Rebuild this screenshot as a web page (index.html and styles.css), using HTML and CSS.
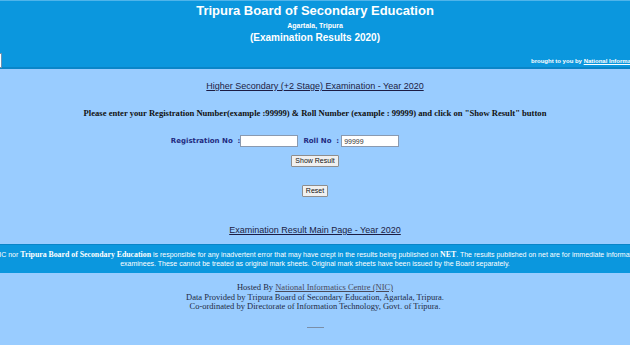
FILE: index.html
```html
<!DOCTYPE html>
<html lang="en">
<head>
    <meta charset="UTF-8">
    <title>TBSE Examination Results 2020</title>
    <link rel="stylesheet" href="styles.css">
</head>
<body>
    <div class="header">
        <div class="title">Tripura Board of Secondary Education</div>
        <div class="place">Agartala, Tripura</div>
        <div class="subtitle">(Examination Results 2020)</div>
        <div class="header-row">
            <input type="text" class="search-box">
            <span class="brought">brought to you by <a href="#">National Informatics Centre</a></span>
        </div>
    </div>

    <div class="main">
        <h3 class="exam-title"><a href="#">Higher Secondary (+2 Stage) Examination - Year 2020</a></h3>
        <p class="instructions">Please enter your Registration Number(example :99999) &amp; Roll Number (example : 99999) and click on "Show Result" button</p>

        <div class="form-row">
            <label for="regno">Registration No&nbsp; :</label>
            <input type="text" id="regno" class="field">
            <label for="rollno" class="roll-label">Roll No&nbsp; :</label>
            <input type="text" id="rollno" class="field" value="99999">
        </div>
        <div class="button-row">
            <button type="button">Show Result</button>
        </div>
        <div class="button-row reset-row">
            <button type="reset">Reset</button>
        </div>

        <div class="main-link"><a href="#">Examination Result Main Page - Year 2020</a></div>
    </div>

    <div class="disclaimer">
        <p>Neither NIC nor <b>Tripura Board of Secondary Education</b> is responsible for any inadvertent error that may have crept in the results being published on <b>NET</b>. The results published on net are for immediate information to the<br>examinees. These cannot be treated as original mark sheets. Original mark sheets have been issued by the Board separately.</p>
    </div>

    <div class="footer">
        Hosted By <a href="#">National Informatics Centre (NIC)</a><br>
        Data Provided by Tripura Board of Secondary Education, Agartala, Tripura.<br>
        Co-ordinated by Directorate of Information Technology, Govt. of Tripura.
        <hr>
    </div>
</body>
</html>
```

FILE: styles.css
```css
body {
    margin: 0;
    background-color: #99ccff;
    font-family: "Liberation Sans", Arial, sans-serif;
    overflow: hidden;
}
.header {
    background-color: #0b97de;
    border-top: 1px solid #4fb4ea;
    border-bottom: 2px solid #0a85c8;
    color: #fff;
    text-align: center;
    height: 66px;
}
.title {
    font-size: 13px;
    font-weight: bold;
    padding-top: 1px;
    line-height: 17px;
}
.place {
    font-size: 7px;
    font-weight: bold;
    line-height: 11px;
    margin-top: 1px;
}
.subtitle {
    font-size: 10px;
    font-weight: bold;
    line-height: 13px;
}
.header-row {
    display: flex;
    justify-content: space-between;
    align-items: center;
    margin-top: 9px;
}
.search-box {
    margin: 0 0 0 -60px;
    width: 60px;
    height: 13px;
    padding: 0;
    border: 1px solid #6a8fb0;
    background: #fff;
}
.brought {
    font-size: 6px;
    font-weight: bold;
    white-space: nowrap;
    margin-right: -32px;
}
.brought a {
    color: #fff;
}
.main {
    text-align: center;
    color: #1c1c44;
}
.exam-title {
    font-size: 9px;
    font-weight: normal;
    margin: 11px 0 0;
    line-height: 12px;
}
.exam-title a, .main-link a {
    color: #1c1c44;
}
.instructions {
    font-family: "Liberation Serif", "Times New Roman", serif;
    font-size: 8.6px;
    font-weight: bold;
    color: #111;
    margin: 15px 0 0;
    line-height: 12px;
}
.form-row {
    display: flex;
    justify-content: center;
    align-items: center;
    margin-top: 16px;
    padding-right: 60px;
}
.form-row label {
    font-family: "DejaVu Sans", Verdana, sans-serif;
    font-size: 7px;
    font-weight: bold;
    color: #1f2a80;
}
.roll-label {
    margin-left: 5px;
    margin-right: 2px;
}
.field {
    width: 52px;
    height: 10px;
    padding: 0 2px;
    margin: 0;
    border: 1px solid #8a9ab0;
    font-family: "Liberation Sans", Arial, sans-serif;
    font-size: 7px;
    color: #333;
}
.button-row {
    display: flex;
    justify-content: center;
    margin-top: 8px;
}
.reset-row {
    margin-top: 18px;
}
button {
    font-family: "Liberation Sans", Arial, sans-serif;
    font-size: 7px;
    padding: 1px 3px;
    height: 12px;
    line-height: 8px;
    background: #f0f0f0;
    border: 1px solid #8e8e8e;
    border-radius: 1px;
    color: #111;
}
.main-link {
    font-size: 9px;
    margin-top: 27px;
    line-height: 12px;
}
.disclaimer {
    display: flex;
    justify-content: center;
    margin-top: 8px;
    background-color: #0b97de;
    border-top: 1px solid #0a85c8;
    color: #fff;
    height: 28px;
}
.disclaimer p {
    margin: 5px 0 0;
    white-space: nowrap;
    text-align: center;
    font-size: 7px;
    line-height: 9px;
}
.disclaimer b {
    font-family: "Liberation Serif", "Times New Roman", serif;
    font-size: 7.8px;
}
.footer {
    font-family: "Liberation Serif", "Times New Roman", serif;
    font-size: 8.5px;
    line-height: 9.5px;
    color: #1e2a44;
    text-align: center;
    margin-top: 10px;
}
.footer a {
    color: #4a4a5a;
}
.footer hr {
    width: 17px;
    margin: 15px auto 0;
    border: 0;
    border-top: 1px solid #7a8ea8;
}
```
